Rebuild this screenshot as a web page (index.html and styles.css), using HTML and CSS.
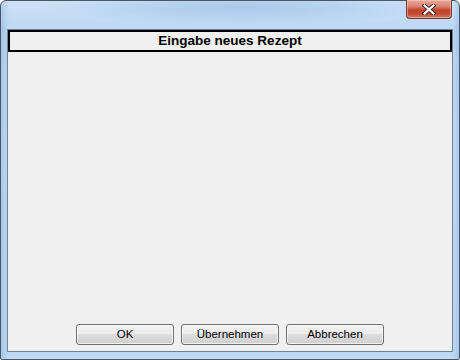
FILE: index.html
```html
<!DOCTYPE html>
<html>
<head>
<meta charset="utf-8">
<link rel="stylesheet" href="styles.css">
</head>
<body>
<div class="window">
  <div class="titlebar">
    <div class="close">
      <svg width="14" height="11" viewBox="0 0 14 11">
        <path d="M2.5 1.5 L11.5 9.5 M11.5 1.5 L2.5 9.5" stroke="#3b2a28" stroke-width="4" stroke-linecap="square" fill="none"/>
        <path d="M2.5 1.5 L11.5 9.5 M11.5 1.5 L2.5 9.5" stroke="#ffffff" stroke-width="2.2" stroke-linecap="square" fill="none"/>
      </svg>
    </div>
  </div>
  <div class="client">
    <div class="header">Eingabe neues Rezept</div>
    <div class="body"></div>
    <div class="buttons">
      <button class="btn">OK</button>
      <button class="btn">Übernehmen</button>
      <button class="btn">Abbrechen</button>
    </div>
  </div>
</div>
</body>
</html>
```

FILE: styles.css
```css
html, body {
  margin: 0;
  padding: 0;
  background: #ffffff;
}
.window {
  box-sizing: border-box;
  width: 460px;
  height: 360px;
  border: 1px solid #4a5866;
  border-radius: 6px 6px 2px 2px;
  display: flex;
  flex-direction: column;
  background:
    radial-gradient(ellipse 200px 18px at 240px 6px, rgba(140,180,225,0.55), rgba(140,180,225,0) 100%),
    linear-gradient(to right, rgba(120,160,210,0.35) 0px, rgba(120,160,210,0) 8px, rgba(120,160,210,0) 452px, rgba(120,160,210,0.35) 458px),
    linear-gradient(to bottom, #cfe2f6 0px, #bcd7f2 30px, #c4dcf4 140px, #bfd9f2 360px);
}
.titlebar {
  height: 28px;
  display: flex;
  justify-content: flex-end;
  align-items: flex-start;
  padding-right: 7px;
}
.close {
  box-sizing: border-box;
  width: 46px;
  height: 19px;
  margin-top: -1px;
  border: 1px solid #6e3a33;
  border-top: none;
  border-radius: 0 0 4px 4px;
  background: linear-gradient(to bottom, #e9a898 0%, #d98574 35%, #c5452e 55%, #c14a33 75%, #d87a60 100%);
  box-shadow: inset 0 0 0 1px rgba(255,220,210,0.45);
  display: flex;
  align-items: center;
  justify-content: center;
}
.close svg { display: block; }
.client {
  box-sizing: border-box;
  margin: 0 6px 7px 6px;
  flex: 1;
  border: 1px solid #6f8196;
  background: #f0f0f0;
  display: flex;
  flex-direction: column;
}
.header {
  box-sizing: border-box;
  height: 22px;
  border: 2px solid #000000;
  font-family: "Liberation Sans", Arial, sans-serif;
  font-weight: bold;
  font-size: 13.5px;
  line-height: 18px;
  text-align: center;
  color: #000000;
}
.body {
  flex: 1;
}
.buttons {
  display: flex;
  justify-content: center;
  gap: 7px;
  padding-bottom: 6px;
}
.btn {
  box-sizing: border-box;
  width: 98px;
  height: 21px;
  border: 1px solid #707070;
  border-radius: 3px;
  background: linear-gradient(to bottom, #f2f2f2 0%, #ebebeb 48%, #dddddd 50%, #cfcfcf 100%);
  box-shadow: inset 0 0 0 1px rgba(255,255,255,0.7);
  font-family: "Liberation Sans", Arial, sans-serif;
  font-size: 11.5px;
  line-height: 17px;
  color: #000000;
  padding: 0;
  margin: 0;
}
```
